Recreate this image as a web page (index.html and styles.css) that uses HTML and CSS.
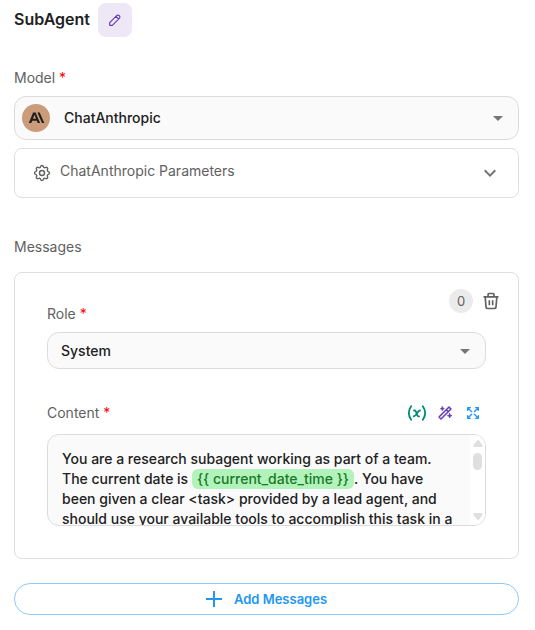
FILE: index.html
```html
<!DOCTYPE html>
<html lang="en">
<head>
<meta charset="utf-8">
<meta name="viewport" content="width=device-width, initial-scale=1">
<title>SubAgent</title>
<link rel="stylesheet" href="styles.css">
</head>
<body>
<main class="panel">
  <header class="panel-header">
    <h1 class="panel-title">SubAgent</h1>
    <button class="edit-button" type="button" aria-label="Edit name">
      <svg width="16" height="16" viewBox="0 0 24 24" fill="none" stroke="currentColor" stroke-width="1.700" stroke-linecap="round" stroke-linejoin="round"><path d="M4 20h4L18.500 9.500a2.800 2.800 0 0 0-4-4L4 16v4M13.500 6.500l4 4"/></svg>
    </button>
  </header>

  <section class="model">
    <label class="label" for="model">Model <span class="required">*</span></label>
    <div class="select-box">
      <svg class="model-logo" width="28" height="28" viewBox="0 0 28 28"><circle cx="14" cy="14" r="14" fill="#cc9b7a"/><path fill="#1f1f1e" fill-rule="evenodd" d="M15.400 8.500h2.300L22.300 19h-2.300zM11.100 8.500h2.500L18.100 19h-2.400l-.9-2.300h-4.600L9.300 19H6.800zm2.900 6.200-1.500-3.900-1.500 3.900z"/></svg>
      <select class="select select-model" id="model"><option>ChatAnthropic</option></select>
      <svg class="caret" width="24" height="24" viewBox="0 0 24 24"><path d="m7 10 5 5 5-5z" fill="currentColor"/></svg>
    </div>
    <button class="parameters" type="button" aria-expanded="false">
      <svg width="20" height="20" viewBox="0 0 24 24" fill="none" stroke="currentColor" stroke-width="1.700" stroke-linejoin="round"><path d="M10.325 4.317c.426-1.756 2.924-1.756 3.350 0a1.724 1.724 0 0 0 2.573 1.066c1.543-.94 3.310.826 2.370 2.370a1.724 1.724 0 0 0 1.065 2.572c1.756.426 1.756 2.924 0 3.350a1.724 1.724 0 0 0-1.066 2.573c.94 1.543-.826 3.310-2.370 2.370a1.724 1.724 0 0 0-2.572 1.065c-.426 1.756-2.924 1.756-3.350 0a1.724 1.724 0 0 0-2.573-1.066c-1.543.94-3.310-.826-2.370-2.370a1.724 1.724 0 0 0-1.065-2.572c-1.756-.426-1.756-2.924 0-3.350a1.724 1.724 0 0 0 1.066-2.573c-.94-1.543.826-3.310 2.370-2.370 1 .608 2.296.070 2.572-1.065z"/><circle cx="12" cy="12" r="3"/></svg>
      <span class="parameters-text">ChatAnthropic Parameters</span>
      <svg class="chevron" width="24" height="24" viewBox="0 0 24 24" fill="currentColor"><path d="M16.590 8.590 12 13.170 7.410 8.590 6 10l6 6 6-6z"/></svg>
    </button>
  </section>

  <section class="messages">
    <h2 class="label">Messages</h2>
    <div class="card">
      <div class="card-top">
        <label class="label" for="role">Role <span class="required">*</span></label>
        <div class="card-actions">
          <span class="badge">0</span>
          <button class="icon-button" type="button" aria-label="Delete message">
            <svg width="20" height="20" viewBox="0 0 24 24" fill="none" stroke="currentColor" stroke-width="2" stroke-linejoin="round"><path d="M3 7h18M5 7l1 12a2 2 0 0 0 2 2h8a2 2 0 0 0 2-2l1-12M8.500 7V4a1 1 0 0 1 1-1h5a1 1 0 0 1 1 1v3M10 11v6M14 11v6"/></svg>
          </button>
        </div>
      </div>
      <div class="select-box">
        <select class="select" id="role"><option>System</option></select>
        <svg class="caret" width="24" height="24" viewBox="0 0 24 24"><path d="m7 10 5 5 5-5z" fill="currentColor"/></svg>
      </div>

      <div class="content-top">
        <span class="label" id="content-label">Content <span class="required">*</span></span>
        <div class="content-actions">
          <button class="icon-button teal" type="button" aria-label="Insert variable">
            <svg width="20" height="20" viewBox="0 0 24 24" fill="none" stroke="currentColor" stroke-width="2.200" stroke-linecap="round" stroke-linejoin="round"><path d="M5 4C1.500 9 1.500 15 5 20M19 4c3.500 5 3.500 11 0 16M8.500 9h1c1 0 1 1 2 3.500 1 2.500 1 3.500 2 3.500h1M8 16c1.500 0 3-2 4-3.500S14 9 15.500 9"/></svg>
          </button>
          <button class="icon-button purple" type="button" aria-label="Generate">
            <svg width="16" height="16" viewBox="0 0 24 24" fill="none" stroke="currentColor" stroke-width="2.200" stroke-linecap="round" stroke-linejoin="round"><path d="M3 18 18 3l3 3L6 21zM14 7l3 3"/><path fill="currentColor" stroke-width="1" d="m8 2.500 1 2 2 1-2 1-1 2-1-2-2-1 2-1zM19 12.500l1 2.500 2.500 1-2.500 1-1 2.500-1-2.500-2.500-1 2.500-1z"/></svg>
          </button>
          <button class="icon-button blue" type="button" aria-label="Expand">
            <svg width="16" height="16" viewBox="0 0 24 24" fill="none" stroke="currentColor" stroke-width="2" stroke-linecap="round" stroke-linejoin="round"><path d="M16 4h4v4M14 10l6-6M8 20H4v-4M4 20l6-6M16 20h4v-4M14 14l6 6M8 4H4v4M4 4l6 6"/></svg>
          </button>
        </div>
      </div>
      <div class="editor">
        <div class="editor-text" role="textbox" aria-multiline="true" aria-labelledby="content-label" contenteditable="true" spellcheck="false">You are a research subagent working as part of a team. The current date is <span class="variable">{{ current_date_time }}</span>. You have been given a clear &lt;task&gt; provided by a lead agent, and should use your available tools to accomplish this task in a</div>
        <div class="scrollbar" aria-hidden="true">
          <svg width="10" height="8" viewBox="0 0 10 8"><path d="M4 1.500Q5 0 6 1.500L9.500 6Q10 8 8.500 8h-7Q0 8 .5 6z" fill="currentColor"/></svg>
          <span class="thumb"></span>
          <svg width="10" height="8" viewBox="0 0 10 8"><path d="M4 6.500Q5 8 6 6.500L9.500 2Q10 0 8.500 0h-7Q0 0 .5 2z" fill="currentColor"/></svg>
        </div>
      </div>
    </div>
  </section>

  <button class="add-button" type="button">
    <svg width="16" height="16" viewBox="0 0 16 16" fill="none" stroke="currentColor" stroke-width="2"><path d="M8 0v16M0 8h16"/></svg>
    Add Messages
  </button>
</main>
</body>
</html>
```
FILE: styles.css
```css
* {
  box-sizing: border-box;
}

body {
  margin: 0;
  background: #fff;
  color: #212121;
  font: 14px/20px Inter, "Liberation Sans", sans-serif;
}

button,
select {
  font: inherit;
  color: inherit;
}

button {
  cursor: pointer;
}

svg {
  display: block;
  flex: none;
}

.panel {
  padding: 3px 16px 16px 14px;
}

.panel-header {
  display: flex;
  align-items: center;
  gap: 8px;
  margin-bottom: 31px;
}

.panel-title {
  margin: 0;
  padding-bottom: 2px;
  font-size: 16px;
  font-weight: 600;
}

.edit-button {
  display: grid;
  place-items: center;
  width: 34px;
  height: 34px;
  padding: 0;
  border: 0;
  border-radius: 8px;
  background: #ede7f6;
  color: #673ab7;
}

.label {
  display: block;
  margin: 0;
  font-size: 14px;
  font-weight: 400;
  color: #616161;
}

.required {
  color: #f00;
}

.select-box {
  display: grid;
  align-items: center;
  margin-top: 8px;
}

.select-box > * {
  grid-area: 1 / 1;
}

.select {
  appearance: none;
  width: 100%;
  padding: 8px 40px 7px 13px;
  border: 1px solid #dcdcdc;
  border-radius: 12px;
  background: #fafafa;
  font-weight: 500;
}

.select-model {
  padding: 11px 40px 11px 49px;
}

.model-logo {
  z-index: 1;
  margin-left: 8px;
  pointer-events: none;
}

.caret {
  justify-self: end;
  margin-right: 9px;
  color: #757575;
  pointer-events: none;
}

.parameters {
  display: flex;
  align-items: center;
  gap: 8px;
  width: 100%;
  margin-top: 8px;
  padding: 12px 16px 12px 17px;
  border: 1px solid #dfdfdf;
  border-radius: 8px;
  background: #fff;
  color: #616161;
  text-align: left;
}

.parameters-text {
  flex: 1;
  padding-bottom: 4px;
}

.chevron {
  color: #757575;
}

.messages {
  margin-top: 39px;
}

.card {
  margin-top: 15px;
  padding: 16px 32px 32px;
  border: 1px solid #dfdfdf;
  border-radius: 8px;
}

.card-top {
  display: flex;
  justify-content: space-between;
}

.card-top .label {
  margin-top: 15px;
}

.card-actions {
  display: flex;
  align-items: center;
  gap: 8px;
  height: 24px;
  margin-right: -15px;
}

.badge {
  width: 24px;
  border-radius: 12px;
  background: #ebebeb;
  color: #616161;
  font-size: 13px;
  line-height: 24px;
  text-align: center;
}

.icon-button {
  display: grid;
  place-items: center;
  width: 20px;
  height: 20px;
  padding: 0;
  border: 0;
  background: none;
  color: #616161;
}

.content-top {
  display: flex;
  align-items: center;
  justify-content: space-between;
  margin-top: 34px;
}

.content-actions {
  display: flex;
  gap: 8px;
  padding-right: 3px;
}

.teal {
  color: #00897b;
}

.purple {
  color: #673ab7;
}

.blue {
  color: #2196f3;
}

.editor {
  display: flex;
  height: 92px;
  margin-top: 11px;
  overflow: hidden;
  border: 1px solid #dcdcdc;
  border-radius: 12px;
  background: #fafafa;
}

.editor-text {
  flex: 1;
  padding: 14px 14px 0;
  overflow: hidden;
  outline: 0;
  font-weight: 500;
}

.variable {
  display: inline-block;
  padding: 0 5px;
  border-radius: 6px;
  background: #b2f2bb;
  color: #187a25;
}

.scrollbar {
  display: flex;
  flex-direction: column;
  align-items: center;
  width: 15px;
  padding: 4px 0;
  background: #fff;
  color: #dfdfdf;
}

.thumb {
  width: 9px;
  height: 17px;
  margin: 6px 0 auto;
  border-radius: 5px;
  background: #dfdfdf;
}

.add-button {
  display: flex;
  align-items: center;
  justify-content: center;
  gap: 12px;
  width: 100%;
  height: 32px;
  margin-top: 24px;
  padding: 0 16px;
  border: 1px solid #90caf9;
  border-radius: 16px;
  background: #fff;
  color: #2196f3;
  font-size: 13px;
  font-weight: 600;
}
```
